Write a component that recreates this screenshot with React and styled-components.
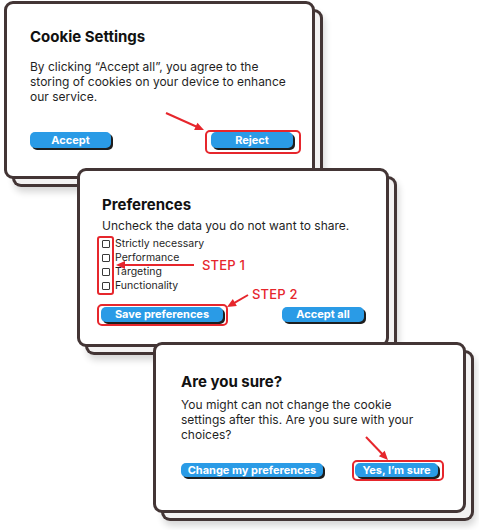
import React from "react";
import styled, { createGlobalStyle } from "styled-components";

const GlobalStyle = createGlobalStyle`
  html, body { margin: 0; padding: 0; background: #ffffff; }
  body { font-family: Inter, "Noto Sans", "Liberation Sans", sans-serif; color: #1c1c1c; }
`;

const INK = "#433535";
const RED = "#e6262c";
const BLUE = "#2a9be6";

const Canvas = styled.main`
  position: relative;
  width: 479px;
  height: 530px;
  overflow: hidden;
  background: #ffffff;
`;

const Card = styled.section`
  position: absolute;
  left: ${(p) => p.$x}px;
  top: ${(p) => p.$y}px;
  width: ${(p) => p.$w}px;
  height: ${(p) => p.$h}px;
  box-sizing: border-box;
  padding: ${(p) => p.$pad};
  display: flex;
  flex-direction: column;
  background: #ffffff;
  border: 3px solid ${INK};
  border-radius: 9px;
  box-shadow: 8px 8px 0 -3px #f3f2f2, 8px 8px 0 0 ${INK},
    10px 13px 7px 0 rgba(0, 0, 0, 0.16);
`;

const Title = styled.h2`
  margin: 0;
  font-size: 15px;
  line-height: 18px;
  font-weight: 700;
  color: #111111;
`;

const Body = styled.p`
  margin: ${(p) => p.$gap}px 0 0;
  max-width: ${(p) => p.$max || 400}px;
  font-size: 12px;
  line-height: 15px;
  color: #1f1f1f;
`;

const Actions = styled.div`
  display: flex;
  justify-content: space-between;
  align-items: center;
  margin-top: ${(p) => p.$gap}px;
`;

const Button = styled.button`
  position: relative;
  box-sizing: border-box;
  width: ${(p) => p.$w}px;
  height: ${(p) => p.$h}px;
  padding: 0;
  margin-left: ${(p) => p.$shift || 0}px;
  border: none;
  border-radius: 5px;
  background: ${BLUE};
  box-shadow: 2px 2px 0 #1e1e1e;
  color: #ffffff;
  font-family: inherit;
  font-size: 11px;
  font-weight: 700;
  line-height: ${(p) => p.$h}px;
  text-align: center;
  white-space: nowrap;

  ${(p) =>
    p.$mark &&
    `
    &::after {
      content: "";
      position: absolute;
      left: -${p.$mark[0]}px;
      top: -${p.$mark[1]}px;
      right: -${p.$mark[2]}px;
      bottom: -${p.$mark[3]}px;
      border: 2px solid ${RED};
      border-radius: 5px;
    }
  `}
`;

const Checklist = styled.ul`
  position: relative;
  list-style: none;
  margin: ${(p) => p.$gap}px 0 0;
  padding: 0;
  display: flex;
  flex-direction: column;
`;

const CheckMark = styled.span`
  position: absolute;
  left: -5px;
  top: -1px;
  width: 17px;
  height: 59px;
  box-sizing: border-box;
  border: 2px solid ${RED};
  border-radius: 3px;
`;

const CheckRow = styled.li`
  display: flex;
  align-items: center;
  gap: 5px;
  height: 14px;
  font-size: 10.5px;
  line-height: 14px;
  color: #1f1f1f;
`;

const Box = styled.span`
  width: 8px;
  height: 8px;
  box-sizing: border-box;
  border: 1px solid #3a3a3a;
  border-radius: 1px;
  background: #ffffff;
  flex: none;
`;

const Overlay = styled.svg`
  position: absolute;
  left: 0;
  top: 0;
  width: 479px;
  height: 530px;
  pointer-events: none;
`;

const StepLabel = styled.span`
  position: absolute;
  left: ${(p) => p.$x}px;
  top: ${(p) => p.$y}px;
  font-size: 13px;
  line-height: 14px;
  font-weight: 500;
  color: ${RED};
  letter-spacing: 0.2px;
`;

function Arrow({ x1, y1, x2, y2 }) {
  const dx = x2 - x1;
  const dy = y2 - y1;
  const len = Math.hypot(dx, dy);
  const ux = dx / len;
  const uy = dy / len;
  const hl = 9;
  const hw = 4;
  const bx = x2 - ux * hl;
  const by = y2 - uy * hl;
  const pts = `${x2},${y2} ${bx - uy * hw},${by + ux * hw} ${bx + uy * hw},${by - ux * hw}`;
  return (
    <g>
      <line x1={x1} y1={y1} x2={bx + ux * 1} y2={by + uy * 1} stroke={RED} strokeWidth="2" />
      <polygon points={pts} fill={RED} />
    </g>
  );
}

const items = ["Strictly necessary", "Performance", "Targeting", "Functionality"];

export default function App() {
  return (
    <>
      <GlobalStyle />
      <Canvas>
        <Card $x={4} $y={1} $w={311} $h={178} $pad="24px 19px 0 23px">
          <Title>Cookie Settings</Title>
          <Body $gap={13} $max={265}>
            By clicking “Accept all”, you agree to the storing of cookies on your device to enhance our service.
          </Body>
          <Actions $gap={28}>
            <Button $w={81} $h={16}>Accept</Button>
            <Button $w={82} $h={16} $mark={[6, 2, 8, 6]}>Reject</Button>
          </Actions>
        </Card>

        <Card $x={77} $y={168} $w={312} $h={179} $pad="25px 22px 0 22px">
          <Title>Preferences</Title>
          <Body $gap={4}>Uncheck the data you do not want to share.</Body>
          <Checklist $gap={4}>
            <CheckMark />
            {items.map((t) => (
              <CheckRow key={t}>
                <Box />
                {t}
              </CheckRow>
            ))}
          </Checklist>
          <Actions $gap={14}>
            <Button $w={122} $h={15} $shift={-1} $mark={[4, 3, 5, 4]}>Save preferences</Button>
            <Button $w={82} $h={15}>Accept all</Button>
          </Actions>
        </Card>

        <Card $x={153} $y={342} $w={313} $h={171} $pad="28px 25px 0 25px">
          <Title>Are you sure?</Title>
          <Body $gap={6} $max={245}>
            You might can not change the cookie settings after this. Are you sure with your choices?
          </Body>
          <Actions $gap={21}>
            <Button $w={142} $h={14}>Change my preferences</Button>
            <Button $w={83} $h={14} $mark={[3, 3, 6, 4]}>Yes, I’m sure</Button>
          </Actions>
        </Card>

        <Overlay viewBox="0 0 479 530">
          <Arrow x1={166} y1={113} x2={204} y2={130} />
          <Arrow x1={194} y1={265} x2={116} y2={265} />
          <Arrow x1={248} y1={295} x2={227} y2={307} />
          <Arrow x1={366} y1={437} x2={388} y2={460} />
        </Overlay>
        <StepLabel $x={202} $y={258}>STEP 1</StepLabel>
        <StepLabel $x={252} $y={287}>STEP 2</StepLabel>
      </Canvas>
    </>
  );
}
